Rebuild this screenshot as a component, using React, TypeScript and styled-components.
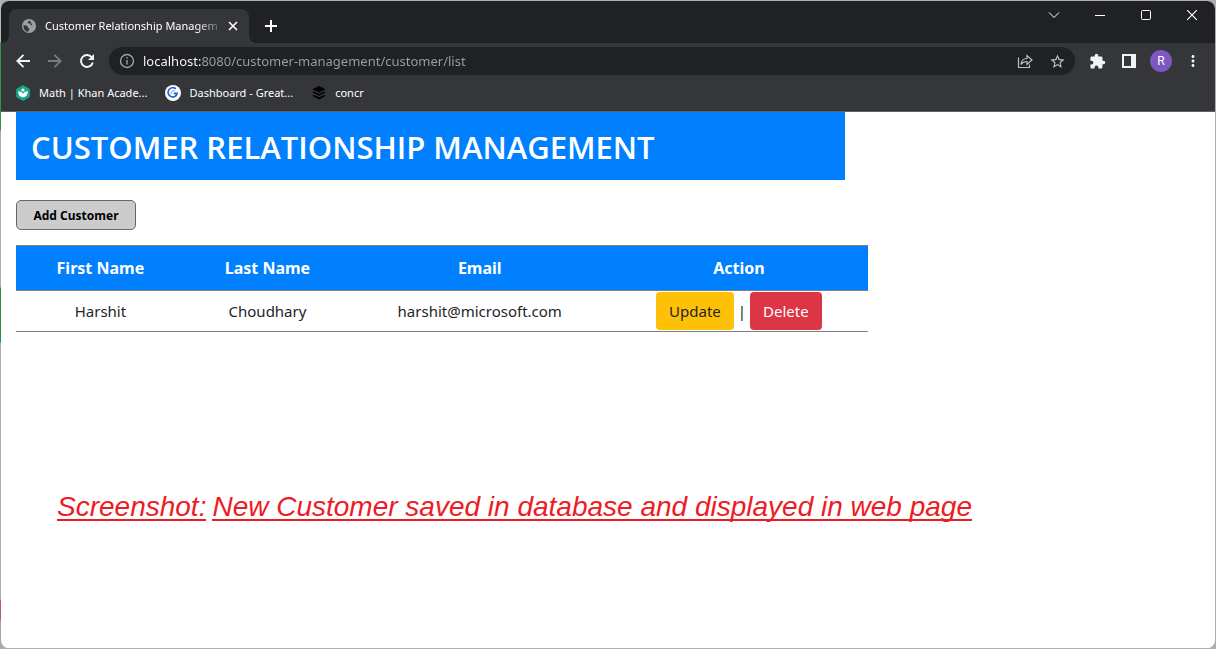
import React from 'react';
import styled, { createGlobalStyle, css } from 'styled-components';

const GlobalStyle = createGlobalStyle`
  *, *::before, *::after { box-sizing: border-box; }
  html, body { margin: 0; height: 100%; }
  body { background: #d9d9d9; }
  #root { height: 100%; }
  button, input { font-family: inherit; margin: 0; }
`;

const Desktop = styled.div`
  min-height: 100%;
  display: flex;
  padding: 1px;
  font-family: 'Noto Sans', 'Segoe UI', sans-serif;
  background:
    linear-gradient(#b4b8b4 42px, #35923f 43px 130px, #adadad 131px 287px, #2f8f48 288px 342px, #adadad 343px 599px, #b9568c 600px 620px, #a5a5a5 621px) 0 0 / 1px 100% no-repeat,
    #adadad;
`;

const BrowserWindow = styled.div`
  flex: 1;
  min-width: 0;
  display: flex;
  flex-direction: column;
  border-radius: 8px;
  overflow: hidden;
  background: #fff;
`;

const TitleBar = styled.div`
  display: flex;
  align-items: stretch;
  height: 42px;
  padding-left: 8px;
  background: #202124;
`;

const Tab = styled.div`
  position: relative;
  display: flex;
  align-items: center;
  width: 240px;
  height: 34px;
  margin-top: 8px;
  padding: 0 8px 0 12px;
  border-radius: 8px 8px 0 0;
  background: #35363a;
  color: #fff;

  &::before, &::after {
    content: '';
    position: absolute;
    bottom: 0;
    width: 8px;
    height: 8px;
  }
  &::before {
    left: -8px;
    background: radial-gradient(circle at 0 0, #202124 8px, #35363a 8px);
  }
  &::after {
    right: -8px;
    background: radial-gradient(circle at 100% 0, #202124 8px, #35363a 8px);
  }
`;

const TabTitle = styled.span`
  flex: 1;
  min-width: 0;
  margin-left: 8px;
  overflow: hidden;
  white-space: nowrap;
  font-size: 11px;
  line-height: 16px;
  mask-image: linear-gradient(90deg, #000 84%, transparent);
`;

const IconButton = styled.button<{ $w?: number }>`
  display: flex;
  align-items: center;
  justify-content: center;
  flex: none;
  width: ${({ $w = 32 }) => $w}px;
  padding: 0;
  border: 0;
  background: none;
  color: inherit;
`;

const NewTab = styled(IconButton)`
  margin: 8px 0 0 6px;
  color: #fff;
`;

const WindowControls = styled.div`
  display: flex;
  height: 28px;
  margin-left: auto;
  color: #fff;
`;

const Toolbar = styled.div`
  display: flex;
  align-items: center;
  height: 36px;
  padding: 0 6px;
  background: #35363a;
  color: #f1f3f4;
`;

const Omnibox = styled.form`
  flex: 1;
  min-width: 0;
  display: flex;
  align-items: center;
  height: 28px;
  margin: 0 6px;
  padding: 0 2px 0 10px;
  border-radius: 14px;
  background: #202124;
  color: #bdc1c6;
`;

const Address = styled.input`
  flex: 1;
  min-width: 0;
  height: 20px;
  margin: 0 8px;
  padding: 0;
  border: 0;
  outline: 0;
  font-size: 13px;
  line-height: 20px;
  color: transparent;
  caret-color: #fff;
  background: linear-gradient(90deg, #fff 58px, #9aa0a6 58px);
  background-clip: text;
  -webkit-background-clip: text;
`;

const Avatar = styled.button`
  width: 22px;
  height: 22px;
  margin: 0 5px;
  padding: 0;
  border: 0;
  border-radius: 50%;
  background: #7e57c2;
  color: #fff;
  font-family: Roboto, sans-serif;
  font-size: 12px;
  line-height: 22px;
  text-align: center;
`;

const Bookmarks = styled.nav`
  display: flex;
  align-items: center;
  gap: 18px;
  height: 33px;
  padding: 0 14px 4px;
  border-bottom: 1px solid #5f6064;
  background: #35363a;
`;

const Bookmark = styled.a`
  display: flex;
  align-items: center;
  gap: 8px;
  color: #fff;
  font-size: 11px;
  line-height: 16px;
  text-decoration: none;
  white-space: nowrap;
`;

const Page = styled.main`
  flex: 1;
  padding: 0 15px;
  background: #fff;
`;

const PageHeader = styled.header`
  width: 70%;
  padding: 13px 15px 11px;
  background: #0080ff;
  color: #fff;
`;

const Heading = styled.h1`
  margin: 0;
  font-family: 'Open Sans', 'Segoe UI', sans-serif;
  font-size: 31px;
  font-weight: 600;
  line-height: 44px;
  white-space: nowrap;
`;

const AddButton = styled.button`
  display: block;
  width: 120px;
  height: 30px;
  margin: 20px 0 15px;
  padding: 0;
  border: 1px solid #666;
  border-radius: 5px;
  background: #ccc;
  color: #000;
  font-size: 12px;
  font-weight: 700;
`;

const CustomerTable = styled.table`
  width: 72%;
  table-layout: fixed;
  border-collapse: collapse;
  color: #212529;
  font-size: 15px;
  line-height: 24px;
  text-align: center;
`;

const Col = styled.col<{ $share: number }>`
  width: ${({ $share }) => $share}%;
`;

const line = css`
  border-top: 1px solid #808080;
  border-bottom: 1px solid #808080;
`;

const HeadCell = styled.th`
  ${line}
  height: 45px;
  padding: 0;
  background: #0080ff;
  color: #fff;
  font-size: 16px;
  font-weight: 700;
`;

const Cell = styled.td`
  ${line}
  height: 41px;
  padding: 1px 0;
`;

const Actions = styled.div`
  display: flex;
  align-items: center;
  justify-content: center;
  gap: 4px;
`;

const ActionLink = styled.a<{ $danger?: boolean }>`
  padding: 7px 13px;
  border-radius: 4px;
  background: ${({ $danger }) => ($danger ? '#dc3545' : '#ffc107')};
  color: ${({ $danger }) => ($danger ? '#fff' : '#212529')};
  text-decoration: none;
`;

const Caption = styled.p`
  display: flex;
  gap: 6px;
  margin: 163px 0 0 41px;
  font-family: 'Liberation Sans', Arial, sans-serif;
  font-size: 28px;
  font-style: italic;
  line-height: 24px;
  color: #ed1c24;
  white-space: nowrap;
`;

const Underlined = styled.span`
  border-bottom: 2px solid #ed1c24;
`;

const Stroke = ({ d, size = 16, width = 2, color = 'currentColor' }: { d: string; size?: number; width?: number; color?: string }) => (
  <svg width={size} height={size} viewBox={`0 0 ${size} ${size}`} fill="none" stroke={color} strokeWidth={width} aria-hidden="true">
    <path d={d} />
  </svg>
);

const Glyph = ({ d, size = 18 }: { d: string; size?: number }) => (
  <svg width={size} height={size} viewBox="0 0 24 24" fill="currentColor" aria-hidden="true">
    <path d={d} />
  </svg>
);

const Globe = () => (
  <svg width="16" height="16" viewBox="0 0 16 16" aria-hidden="true">
    <circle cx="8" cy="8" r="7" fill="#9aa0a6" />
    <path d="M2.4 7.2c1.8 0 3.6.2 4.300 1.200.4.8-.1 1.400.9 1.700.9.3 1.100.9.4 1.600-.6.6-.7 1.300-.7 2.100C4.400 13.700 2.200 11 2.400 7.200ZM8.800 2.300c-.2 1-.9 1.400-1.700 1.500-.7.200-.4.9-.5 1.500.8.300 2.100-.1 2.600.8.300.6.300 1.300 1.300.9 0 1 .9 1.900.9.500 0 1-.1 1.200-.5C13.500 4.800 11.400 2.500 8.800 2.300Z" fill="#35363a" />
  </svg>
);

const KhanLogo = () => (
  <svg width="16" height="16" viewBox="0 0 16 16" aria-hidden="true">
    <path d="M7.200.4a1.600 1.600 0 0 1 1.600 0l5.200 3a1.600 1.600 0 0 1 .8 1.400v6.400a1.600 1.600 0 0 1-.8 1.400l-5.200 3a1.600 1.600 0 0 1-1.600 0l-5.200-3a1.600 1.600 0 0 1-.8-1.400V4.800A1.600 1.600 0 0 1 2 3.400Z" fill="#14a98b" />
    <circle cx="8" cy="5" r="1.600" fill="#fff" />
    <path d="M3.200 6.200c2.500 0 4.100 1 4.800 2.600.7-1.600 2.300-2.600 4.800-2.600 0 3.700-1.900 6-4.800 6s-4.800-2.300-4.800-6Z" fill="#fff" />
  </svg>
);

const GreatLogo = () => (
  <svg width="16" height="16" viewBox="0 0 16 16" aria-hidden="true">
    <circle cx="8" cy="8" r="8" fill="#fff" />
    <path d="M10.800 3.900A4.600 4.600 0 1 0 12.200 8.300H8.600" fill="none" stroke="#2463d1" strokeWidth="1.700" />
    <path d="M10 6A2.700 2.700 0 0 0 6.200 9.400" fill="none" stroke="#6fa0ee" strokeWidth="1" />
  </svg>
);

const LayersLogo = () => (
  <svg width="16" height="16" viewBox="0 0 16 16" aria-hidden="true">
    <path d="m8 1 6.700 3.300L8 7.600 1.300 4.300ZM1.300 7.300 3 6.500l5 2.400 5-2.400 1.700.8L8 10.700ZM1.300 10.700 3 9.900l5 2.400 5-2.400 1.700.8L8 14.500Z" fill="#000" />
  </svg>
);

const columns = [
  { title: 'First Name', share: 19.8 },
  { title: 'Last Name', share: 19.4 },
  { title: 'Email', share: 30.4 },
  { title: 'Action', share: 30.4 },
];

const customers = [{ first: 'Harshit', last: 'Choudhary', email: 'harshit@microsoft.com' }];

const bookmarks = [
  { label: 'Math | Khan Acade...', icon: <KhanLogo /> },
  { label: 'Dashboard - Great...', icon: <GreatLogo /> },
  { label: 'concr', icon: <LayersLogo /> },
];

export default function App() {
  return (
    <Desktop>
      <GlobalStyle />
      <BrowserWindow>
        <TitleBar>
          <Tab>
            <Globe />
            <TabTitle>Customer Relationship Managem</TabTitle>
            <IconButton $w={16} aria-label="Close tab">
              <Stroke size={10} width={1.6} d="M1 1l8 8M9 1l-8 8" />
            </IconButton>
          </Tab>
          <NewTab aria-label="New tab">
            <Stroke size={12} d="M6 0v12M0 6h12" />
          </NewTab>
          <WindowControls>
            <IconButton $w={46} aria-label="Search tabs">
              <Stroke size={12} width={1} d="M1 3.500l5 5 5-5" />
            </IconButton>
            <IconButton $w={46} aria-label="Minimize">
              <Stroke size={10} width={1} d="M0 5.500h10" />
            </IconButton>
            <IconButton $w={46} aria-label="Maximize">
              <Stroke size={10} width={1} d="M1.500.5h7a1 1 0 0 1 1 1v7a1 1 0 0 1-1 1h-7a1 1 0 0 1-1-1v-7a1 1 0 0 1 1-1Z" />
            </IconButton>
            <IconButton $w={46} aria-label="Close">
              <Stroke size={10} width={1.2} d="M0 0l10 10M10 0L0 10" />
            </IconButton>
          </WindowControls>
        </TitleBar>

        <Toolbar>
          <IconButton aria-label="Back">
            <Stroke d="M15 8H2.500M8.500 1.800L2.300 8l6.200 6.200" width={1.8} />
          </IconButton>
          <IconButton aria-label="Forward">
            <Stroke d="M1 8h12.500M7.500 1.800L13.700 8l-6.200 6.200" width={1.8} color="#7b7c7f" />
          </IconButton>
          <IconButton aria-label="Reload">
            <svg width="16" height="16" viewBox="0 0 16 16" aria-hidden="true">
              <path d="M13 4.600A6 6 0 1 0 13.800 9.500" fill="none" stroke="currentColor" strokeWidth="2" />
              <path d="M15 1v6H9Z" fill="currentColor" />
            </svg>
          </IconButton>
          <Omnibox onSubmit={(e) => e.preventDefault()}>
            <Stroke width={1.4} d="M8 1.500a6.500 6.500 0 1 1 0 13a6.500 6.500 0 1 1 0-13ZM8 7v4.500M7.300 4.800h1.400" color="#9aa0a6" />
            <Address aria-label="Address" defaultValue="localhost:8080/customer-management/customer/list" />
            <IconButton type="button" aria-label="Share">
              <Stroke width={1.2} d="M1.500 4.500v10h11v-3M4 11.500c.4-3.600 2.400-6 6-6v-3l5 4.500-5 4.500v-3c-2.800 0-4.500.8-6 3Z" />
            </IconButton>
            <IconButton type="button" aria-label="Bookmark this page">
              <Glyph size={17} d="m22 9.240-7.190-.62L12 2 9.190 8.630 2 9.240l5.460 4.730L5.820 21 12 17.270 18.180 21l-1.630-7.030L22 9.240zM12 15.400l-3.760 2.270 1-4.280-3.320-2.880 4.380-.38L12 6.100l1.710 4.040 4.380.38-3.320 2.880 1 4.280L12 15.400z" />
            </IconButton>
          </Omnibox>
          <IconButton aria-label="Extensions">
            <Glyph size={17} d="M20.500 11H19V7c0-1.100-.9-2-2-2h-4V3.500a2.500 2.500 0 0 0-5 0V5H4c-1.100 0-2 .9-2 2v3.800h1.500a2.700 2.700 0 0 1 0 5.400H2V20c0 1.100.9 2 2 2h3.800v-1.500a2.700 2.700 0 0 1 5.400 0V22H17c1.100 0 2-.9 2-2v-4h1.500a2.500 2.500 0 0 0 0-5z" />
          </IconButton>
          <IconButton aria-label="Side panel">
            <Stroke size={14} d="M1 1h12v12H1ZM10 1v12M11 1v12" />
          </IconButton>
          <Avatar aria-label="Profile">R</Avatar>
          <IconButton aria-label="Menu">
            <Glyph d="M12 8c1.100 0 2-.9 2-2s-.9-2-2-2-2 .9-2 2 .9 2 2 2zm0 2c-1.100 0-2 .9-2 2s.9 2 2 2 2-.9 2-2-.9-2-2-2zm0 6c-1.100 0-2 .9-2 2s.9 2 2 2 2-.9 2-2-.9-2-2-2z" />
          </IconButton>
        </Toolbar>

        <Bookmarks aria-label="Bookmarks">
          {bookmarks.map((b) => (
            <Bookmark key={b.label} href="#">
              {b.icon}
              {b.label}
            </Bookmark>
          ))}
        </Bookmarks>

        <Page>
          <PageHeader>
            <Heading>CUSTOMER RELATIONSHIP MANAGEMENT</Heading>
          </PageHeader>
          <AddButton>Add Customer</AddButton>
          <CustomerTable>
            <colgroup>
              {columns.map((c) => (
                <Col key={c.title} $share={c.share} />
              ))}
            </colgroup>
            <thead>
              <tr>
                {columns.map((c) => (
                  <HeadCell key={c.title} scope="col">{c.title}</HeadCell>
                ))}
              </tr>
            </thead>
            <tbody>
              {customers.map((c) => (
                <tr key={c.email}>
                  <Cell>{c.first}</Cell>
                  <Cell>{c.last}</Cell>
                  <Cell>{c.email}</Cell>
                  <Cell>
                    <Actions>
                      <ActionLink href="#update">Update</ActionLink>
                      <span>|</span>
                      <ActionLink href="#delete" $danger>Delete</ActionLink>
                    </Actions>
                  </Cell>
                </tr>
              ))}
            </tbody>
          </CustomerTable>
          <Caption>
            <Underlined>Screenshot:</Underlined>
            <Underlined>New Customer saved in database and displayed in web page</Underlined>
          </Caption>
        </Page>
      </BrowserWindow>
    </Desktop>
  );
}
